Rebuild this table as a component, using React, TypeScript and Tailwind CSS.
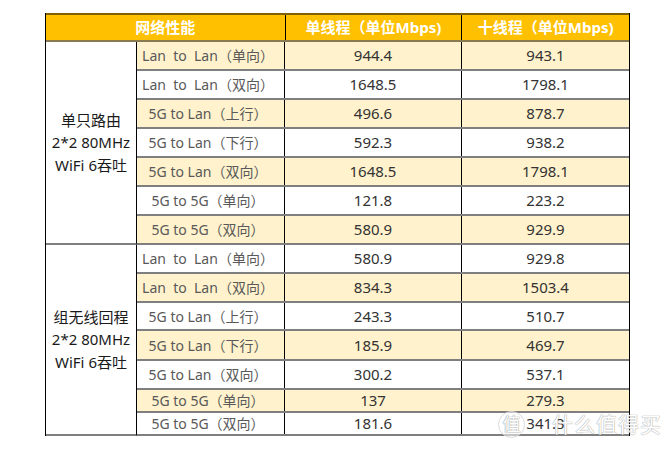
const FONT = { fontFamily: "'Noto Sans', 'Noto Sans CJK SC', sans-serif" };

type Row = { label: string; single: string; ten: string; hl: boolean; h: string };

const GROUP_A: Row[] = [
  { label: 'Lan\u00a0\u00a0to\u00a0\u00a0Lan（单向）', single: '944.4', ten: '943.1', hl: true, h: 'h-[29px]' },
  { label: 'Lan\u00a0\u00a0to\u00a0\u00a0Lan（双向）', single: '1648.5', ten: '1798.1', hl: false, h: 'h-[29px]' },
  { label: '5G to Lan（上行）', single: '496.6', ten: '878.7', hl: true, h: 'h-[29px]' },
  { label: '5G to Lan（下行）', single: '592.3', ten: '938.2', hl: false, h: 'h-[29px]' },
  { label: '5G to Lan（双向）', single: '1648.5', ten: '1798.1', hl: true, h: 'h-[29px]' },
  { label: '5G to 5G（单向）', single: '121.8', ten: '223.2', hl: false, h: 'h-[29px]' },
  { label: '5G to 5G（双向）', single: '580.9', ten: '929.9', hl: true, h: 'h-[29px]' },
];

const GROUP_B: Row[] = [
  { label: 'Lan\u00a0\u00a0to\u00a0\u00a0Lan（单向）', single: '580.9', ten: '929.8', hl: false, h: 'h-[29px]' },
  { label: 'Lan\u00a0\u00a0to\u00a0\u00a0Lan（双向）', single: '834.3', ten: '1503.4', hl: true, h: 'h-[29px]' },
  { label: '5G to Lan（上行）', single: '243.3', ten: '510.7', hl: false, h: 'h-[28px]' },
  { label: '5G to Lan（下行）', single: '185.9', ten: '469.7', hl: true, h: 'h-[30px]' },
  { label: '5G to Lan（双向）', single: '300.2', ten: '537.1', hl: false, h: 'h-[29px]' },
  { label: '5G to 5G（单向）', single: '137', ten: '279.3', hl: true, h: 'h-[23px]' },
  { label: '5G to 5G（双向）', single: '181.6', ten: '341.3', hl: false, h: 'h-[23px]' },
];

function DataRow({ row }: { row: Row }) {
  const bg = row.hl ? 'bg-[#fff2cc]' : 'bg-white';
  return (
    <div className={`flex ${row.h} border-b-2 border-[#7f7f7f] ${bg}`}>
      <div className="w-[148px] flex items-center justify-center pr-[5px] text-[14px] text-[#595959] border-r border-black whitespace-nowrap">
        {row.label}
      </div>
      <div className="w-[177px] flex items-center justify-center text-[15px] text-[#333333] border-r border-black">
        {row.single}
      </div>
      <div className="w-[167px] flex items-center justify-center text-[15px] text-[#333333]">
        {row.ten}
      </div>
    </div>
  );
}

function Group({ title, rows, h }: { title: string; rows: Row[]; h: string }) {
  return (
    <div className="flex">
      <div className={`w-[91px] ${h} flex flex-col items-center justify-center border-r border-b-2 border-r-black border-b-[#7f7f7f] bg-white text-[15px] leading-[22.5px] text-[#1a1a1a]`}>
        <span>{title}</span>
        <span className="whitespace-nowrap">2*2 80MHz</span>
        <span>WiFi 6吞吐</span>
      </div>
      <div className="flex flex-col">
        {rows.map((r, i) => (
          <DataRow key={i} row={r} />
        ))}
      </div>
    </div>
  );
}

export default function App() {
  return (
    <div className="relative w-[665px] h-[451px] bg-white overflow-hidden" style={FONT}>
      <div className="pt-[13px] pl-[45px]">
        <div className="w-[585px] border-l border-r border-black">
          <div className="flex h-[29px] bg-[#ffc000] border-t-2 border-b-2 border-t-[#7f6000] border-b-[#8a7a50] text-white font-bold text-[15px]">
            <div className="w-[240px] flex items-center justify-center border-r border-black">网络性能</div>
            <div className="w-[177px] flex items-center justify-center border-r border-black whitespace-nowrap">单线程（单位Mbps)</div>
            <div className="w-[167px] flex items-center justify-center whitespace-nowrap">十线程（单位Mbps)</div>
          </div>
          <Group title="单只路由" rows={GROUP_A} h="h-[203px]" />
          <Group title="组无线回程" rows={GROUP_B} h="h-[191px]" />
        </div>
      </div>

      {/* watermark */}
      <div className="absolute left-[498px] top-[409px] flex items-center gap-[27px] opacity-90">
        <div className="w-[27px] h-[27px] rounded-full bg-white/60 border border-[#d8d8d8] flex items-center justify-center text-[18px] text-white [text-shadow:0_0_1px_#888,0_0_1px_#888]">
          值
        </div>
        <div className="text-[21px] tracking-[1px] text-white [text-shadow:0_0_1px_#999,0_0_1px_#999]">什么值得买</div>
      </div>
    </div>
  );
}
